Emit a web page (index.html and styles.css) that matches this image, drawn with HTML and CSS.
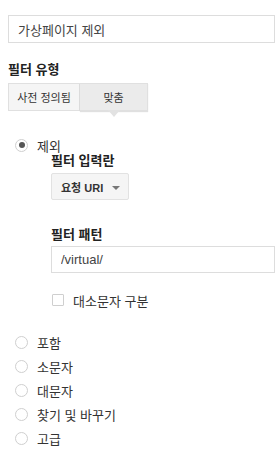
FILE: index.html
```html
<!DOCTYPE html>
<html lang="ko">

<head>
    <meta charset="UTF-8">
    <meta name="viewport" content="width=device-width, initial-scale=1.0">
    <title>필터 수정</title>
    <link rel="stylesheet" href="styles.css">
</head>

<body>

    <div class="filter-form">
        <input type="text" class="text-field name-field" value="가상페이지 제외">

        <div class="section-label">필터 유형</div>
        <div class="tabs">
            <div class="tab">사전 정의됨</div>
            <div class="tab active">맞춤</div>
        </div>

        <div class="radio-list">
            <div class="radio-row">
                <span class="radio checked"></span>
                <span class="radio-text">제외</span>
            </div>

            <div class="sub-options">
                <div class="sub-label">필터 입력란</div>
                <div class="dropdown">
                    <span class="dropdown-text">요청 URI</span>
                    <span class="dropdown-arrow"></span>
                </div>

                <div class="sub-label pattern-label">필터 패턴</div>
                <input type="text" class="text-field pattern-field" value="/virtual/">

                <div class="check-row">
                    <span class="checkbox"></span>
                    <span class="check-text">대소문자 구분</span>
                </div>
            </div>

            <div class="other-options">
                <div class="radio-row">
                    <span class="radio"></span>
                    <span class="radio-text">포함</span>
                </div>
                <div class="radio-row">
                    <span class="radio"></span>
                    <span class="radio-text">소문자</span>
                </div>
                <div class="radio-row">
                    <span class="radio"></span>
                    <span class="radio-text">대문자</span>
                </div>
                <div class="radio-row">
                    <span class="radio"></span>
                    <span class="radio-text">찾기 및 바꾸기</span>
                </div>
                <div class="radio-row">
                    <span class="radio"></span>
                    <span class="radio-text">고급</span>
                </div>
            </div>
        </div>
    </div>

</body>

</html>
```

FILE: styles.css
```css
body {
    margin: 0;
    font-family: "Liberation Sans", "Noto Sans CJK KR", sans-serif;
    font-size: 13px;
    color: #333;
    background-color: #fff;
}

.filter-form {
    padding: 15px 5px 0 8px;
}

.text-field {
    display: block;
    width: 100%;
    box-sizing: border-box;
    height: 28px;
    padding: 0 9px;
    border: 1px solid #ddd;
    border-radius: 0;
    font-family: inherit;
    font-size: 13px;
    color: #444;
    outline: none;
}

.section-label {
    margin-top: 19px;
    font-weight: bold;
    font-size: 13px;
    line-height: 16px;
    color: #222;
}

.tabs {
    display: flex;
    width: 140px;
    margin-top: 5px;
}

.tab {
    position: relative;
    height: 28px;
    line-height: 28px;
    box-sizing: border-box;
    text-align: center;
    font-size: 11px;
    color: #333;
    background-color: #f5f5f5;
    border: 1px solid #e0e0e0;
}

.tab:first-child {
    width: 72px;
}

.tab.active {
    width: 68px;
    border-left: none;
    background-color: #ebebeb;
    box-shadow: 0 1px 1px rgba(0, 0, 0, 0.12);
}

.tab.active::after {
    content: "";
    position: absolute;
    left: 50%;
    bottom: -7px;
    margin-left: -6px;
    border-left: 6px solid transparent;
    border-right: 6px solid transparent;
    border-top: 7px solid #e2e2e2;
}

.radio-list {
    margin-top: 22px;
    padding-left: 7px;
}

.radio-row {
    display: flex;
    align-items: center;
    height: 24px;
}

.radio {
    width: 13px;
    height: 13px;
    box-sizing: border-box;
    border: 1px solid #cfcfcf;
    border-radius: 50%;
    background-color: #fff;
    margin-right: 9px;
    position: relative;
}

.radio.checked::after {
    content: "";
    position: absolute;
    left: 2.5px;
    top: 2.5px;
    width: 6px;
    height: 6px;
    border-radius: 50%;
    background-color: #555;
}

.radio-text {
    font-size: 13px;
    color: #333;
}

.sub-options {
    padding-left: 36px;
}

.sub-label {
    font-weight: bold;
    font-size: 13px;
    line-height: 16px;
    color: #222;
    margin-top: -4px;
}

.dropdown {
    display: flex;
    align-items: center;
    justify-content: space-between;
    width: 78px;
    height: 27px;
    box-sizing: border-box;
    margin-top: 4px;
    padding: 0 8px 0 9px;
    background-color: #f5f5f5;
    border: 1px solid #e2e2e2;
    border-radius: 2px;
}

.dropdown-text {
    font-weight: bold;
    font-size: 11px;
    color: #333;
}

.dropdown-arrow {
    border-left: 4px solid transparent;
    border-right: 4px solid transparent;
    border-top: 4px solid #777;
    margin-top: 2px;
}

.pattern-label {
    margin-top: 27px;
}

.pattern-field {
    height: 27px;
    margin-top: 3px;
}

.check-row {
    display: flex;
    align-items: center;
    margin-top: 19px;
    height: 16px;
}

.checkbox {
    width: 12px;
    height: 12px;
    box-sizing: border-box;
    border: 1px solid #cfcfcf;
    border-radius: 1px;
    margin: 0 9px 0 1px;
}

.check-text {
    font-size: 13px;
    color: #333;
}

.other-options {
    margin-top: 22px;
}
```
